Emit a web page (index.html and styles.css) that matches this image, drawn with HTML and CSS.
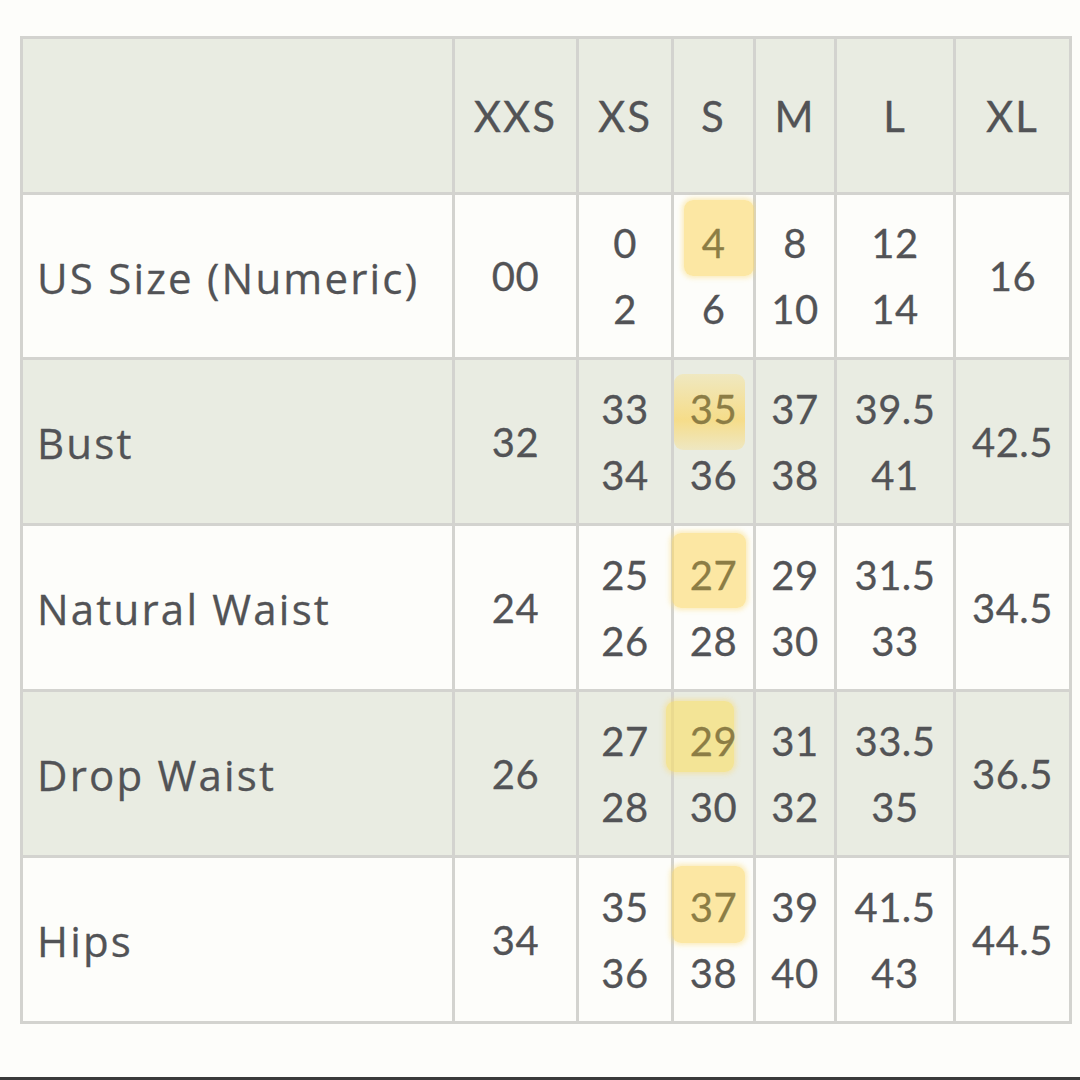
FILE: index.html
```html
<!DOCTYPE html>
<html lang="en">
<head>
<meta charset="utf-8">
<title>Size Chart</title>
<link rel="stylesheet" href="styles.css">
</head>
<body>
<div class="page">
  <div class="chart">
    <div class="cell head label"></div>
    <div class="cell head">XXS</div>
    <div class="cell head">XS</div>
    <div class="cell head">S</div>
    <div class="cell head">M</div>
    <div class="cell head">L</div>
    <div class="cell head">XL</div>

    <div class="cell label">US Size (Numeric)</div>
    <div class="cell">00</div>
    <div class="cell pair"><span>0</span><span>2</span></div>
    <div class="cell pair"><span class="hl hl-1">4</span><span>6</span></div>
    <div class="cell pair"><span>8</span><span>10</span></div>
    <div class="cell pair"><span>12</span><span>14</span></div>
    <div class="cell">16</div>

    <div class="cell tint label">Bust</div>
    <div class="cell tint">32</div>
    <div class="cell tint pair"><span>33</span><span>34</span></div>
    <div class="cell tint pair"><span class="hl hl-2">35</span><span>36</span></div>
    <div class="cell tint pair"><span>37</span><span>38</span></div>
    <div class="cell tint pair"><span>39.5</span><span>41</span></div>
    <div class="cell tint">42.5</div>

    <div class="cell label">Natural Waist</div>
    <div class="cell">24</div>
    <div class="cell pair"><span>25</span><span>26</span></div>
    <div class="cell pair"><span class="hl hl-3">27</span><span>28</span></div>
    <div class="cell pair"><span>29</span><span>30</span></div>
    <div class="cell pair"><span>31.5</span><span>33</span></div>
    <div class="cell">34.5</div>

    <div class="cell tint label">Drop Waist</div>
    <div class="cell tint">26</div>
    <div class="cell tint pair"><span>27</span><span>28</span></div>
    <div class="cell tint pair"><span class="hl hl-4">29</span><span>30</span></div>
    <div class="cell tint pair"><span>31</span><span>32</span></div>
    <div class="cell tint pair"><span>33.5</span><span>35</span></div>
    <div class="cell tint">36.5</div>

    <div class="cell label">Hips</div>
    <div class="cell">34</div>
    <div class="cell pair"><span>35</span><span>36</span></div>
    <div class="cell pair"><span class="hl hl-5">37</span><span>38</span></div>
    <div class="cell pair"><span>39</span><span>40</span></div>
    <div class="cell pair"><span>41.5</span><span>43</span></div>
    <div class="cell">44.5</div>
  </div>
  <div class="bottom-bar"></div>
</div>
</body>
</html>
```

FILE: styles.css
```css
html, body {
  margin: 0;
  padding: 0;
  background: #fdfdfa;
}

.page {
  width: 1080px;
  height: 1080px;
  display: flex;
  flex-direction: column;
  box-sizing: border-box;
  padding: 36px 0 0 20px;
  position: relative;
}

.chart {
  display: grid;
  grid-template-columns: 429px 121px 92px 79px 78px 116px 113px;
  grid-template-rows: 153px 162px 163px 163px 163px 163px;
  gap: 3px;
  padding: 3px;
  width: max-content;
  background: #d3d3cf;
  font-family: "Lato", "Open Sans", sans-serif;
  font-size: 40px;
  color: #525356;
  letter-spacing: 0.5px;
  -webkit-text-stroke: 0.3px #525356;
}

.cell {
  background: #fdfdfa;
  display: flex;
  flex-direction: column;
  align-items: center;
  justify-content: center;
  position: relative;
}

.cell.head,
.cell.tint {
  background: #e9ece2;
}

.cell.head {
  font-size: 42px;
  letter-spacing: 2px;
  padding-top: 1px;
  box-sizing: border-box;
}

.cell.label {
  align-items: flex-start;
  padding-left: 14px;
  font-family: "Open Sans", "Lato", sans-serif;
  font-size: 42px;
  letter-spacing: 2.2px;
  padding-top: 2px;
}

.pair span {
  display: block;
  line-height: 66px;
  position: relative;
}

.hl {
  color: #8c7d45;
  -webkit-text-stroke: 0.3px #8c7d45;
  z-index: 0;
}

.hl::before {
  content: "";
  position: absolute;
  z-index: -1;
  background: rgba(251, 218, 110, 0.62);
  border-radius: 9px;
  box-shadow: 0 0 5px 2px rgba(251, 218, 110, 0.45);
}

.hl-1::before { left: -18px; right: -29px; top: -10px; bottom: 0; }
.hl-2::before { left: -16px; right: -8px; top: -2px; bottom: -8px;
  background: linear-gradient(rgba(251, 225, 130, 0.35), rgba(251, 214, 100, 0.7) 60%, rgba(251, 220, 120, 0.3));
  box-shadow: none; }
.hl-3::before { left: -18px; right: -9px; top: -9px; bottom: 0; }
.hl-4::before { left: -24px; right: 3px; top: -7px; bottom: 2px;
  background: rgba(250, 224, 100, 0.6); }
.hl-5::before { left: -18px; right: -8px; top: -8px; bottom: -3px; }

.bottom-bar {
  position: absolute;
  left: 0;
  right: 0;
  bottom: 0;
  height: 3px;
  background: #3a3a3a;
}
```
